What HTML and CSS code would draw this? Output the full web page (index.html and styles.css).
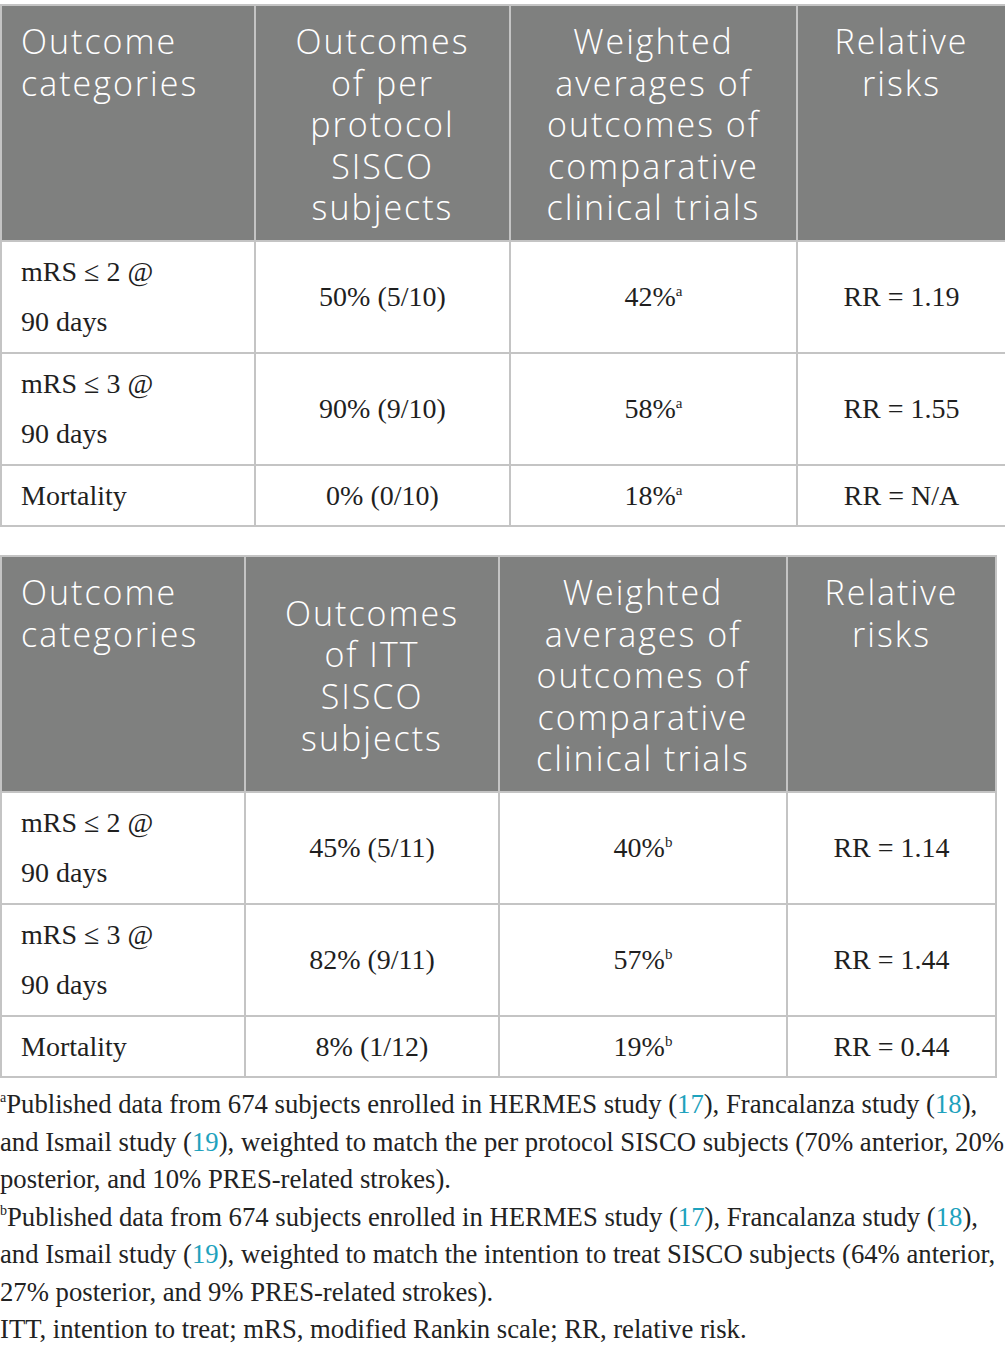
FILE: index.html
```html
<!DOCTYPE html>
<html>
<head>
<meta charset="utf-8">
<link rel="stylesheet" href="styles.css">
</head>
<body>
<div class="page">
  <table class="tbl tbl-one">
    <colgroup><col class="c1a"><col class="c2a"><col class="c3a"><col class="c4a"></colgroup>
    <thead>
      <tr>
        <th class="h-left">Outcome<br>categories</th>
        <th class="h-mid">Outcomes<br>of per<br>protocol<br>SISCO<br>subjects</th>
        <th class="h-mid">Weighted<br>averages of<br>outcomes of<br>comparative<br>clinical trials</th>
        <th class="h-top">Relative<br>risks</th>
      </tr>
    </thead>
    <tbody>
      <tr class="r2"><td class="first">mRS ≤ 2 @<br>90 days</td><td>50% (5/10)</td><td>42%<sup class="s">a</sup></td><td>RR = 1.19</td></tr>
      <tr class="r2"><td class="first">mRS ≤ 3 @<br>90 days</td><td>90% (9/10)</td><td>58%<sup class="s">a</sup></td><td>RR = 1.55</td></tr>
      <tr class="r1"><td class="first">Mortality</td><td>0% (0/10)</td><td>18%<sup class="s">a</sup></td><td>RR = N/A</td></tr>
    </tbody>
  </table>

  <table class="tbl tbl-two">
    <colgroup><col class="c1b"><col class="c2b"><col class="c3b"><col class="c4b"></colgroup>
    <thead>
      <tr>
        <th class="h-left">Outcome<br>categories</th>
        <th class="h-mid">Outcomes<br>of ITT<br>SISCO<br>subjects</th>
        <th class="h-mid">Weighted<br>averages of<br>outcomes of<br>comparative<br>clinical trials</th>
        <th class="h-top">Relative<br>risks</th>
      </tr>
    </thead>
    <tbody>
      <tr class="r2"><td class="first">mRS ≤ 2 @<br>90 days</td><td>45% (5/11)</td><td>40%<sup class="s">b</sup></td><td>RR = 1.14</td></tr>
      <tr class="r2"><td class="first">mRS ≤ 3 @<br>90 days</td><td>82% (9/11)</td><td>57%<sup class="s">b</sup></td><td>RR = 1.44</td></tr>
      <tr class="r1"><td class="first">Mortality</td><td>8% (1/12)</td><td>19%<sup class="s">b</sup></td><td>RR = 0.44</td></tr>
    </tbody>
  </table>

  <div class="notes">
    <p class="note"><sup class="fs">a</sup>Published data from 674 subjects enrolled in HERMES study (<span class="ref">17</span>), Francalanza study (<span class="ref">18</span>),<br>and Ismail study (<span class="ref">19</span>), weighted to match the per protocol SISCO subjects (70% anterior, 20%<br>posterior, and 10% PRES-related strokes).</p>
    <p class="note"><sup class="fs">b</sup>Published data from 674 subjects enrolled in HERMES study (<span class="ref">17</span>), Francalanza study (<span class="ref">18</span>),<br>and Ismail study (<span class="ref">19</span>), weighted to match the intention to treat SISCO subjects (64% anterior,<br>27% posterior, and 9% PRES-related strokes).</p>
    <p class="note">ITT, intention to treat; mRS, modified Rankin scale; RR, relative risk.</p>
  </div>
</div>
</body>
</html>
```

FILE: styles.css
```css
html, body {
  margin: 0;
  padding: 0;
  background: #ffffff;
}

.page {
  padding-top: 4px;
  width: 1005px;
}

.tbl {
  border-collapse: collapse;
  table-layout: fixed;
  color: #1f1f1f;
}

.tbl-one { width: 1005px; }
.tbl-two { width: 995px; margin-top: 28px; }

.c1a { width: 254px; }
.c2a { width: 255px; }
.c3a { width: 287px; }
.c4a { width: 209px; }

.c1b { width: 244px; }
.c2b { width: 254px; }
.c3b { width: 288px; }
.c4b { width: 209px; }

.tbl th,
.tbl td {
  border: 2px solid #c4c4c4;
}

.tbl th {
  background: #7f807f;
  color: #ffffff;
  font-family: "Open Sans", "DejaVu Sans", sans-serif;
  font-weight: 350;
  font-size: 34px;
  line-height: 41.6px;
  letter-spacing: 2px;
  padding: 15px 4px 11px 4px;
  text-align: center;
  height: 208px;
}

.tbl th.h-left {
  text-align: left;
  vertical-align: top;
  padding-left: 19px;
}

.tbl th.h-mid { vertical-align: middle; }
.tbl th.h-top { vertical-align: top; }

.tbl td {
  font-family: "Liberation Serif", "Times New Roman", serif;
  font-size: 28px;
  line-height: 50px;
  text-align: center;
  vertical-align: middle;
  padding: 0 10px;
}

.tbl tr.r2 td { height: 110px; }
.tbl tr.r1 td { height: 59px; }

.tbl td.first {
  text-align: left;
  padding-left: 19px;
}

.s {
  font-size: 15px;
  line-height: 0;
  vertical-align: 10px;
}

.notes {
  font-family: "Liberation Serif", "Times New Roman", serif;
  color: #222222;
  font-size: 26.7px;
  line-height: 37.5px;
  letter-spacing: 0;
  padding-top: 8px;
}

.note {
  margin: 0;
  white-space: nowrap;
}

.fs {
  font-size: 14px;
  line-height: 0;
  vertical-align: 11px;
}

.ref {
  color: #1ea2bd;
}
```
